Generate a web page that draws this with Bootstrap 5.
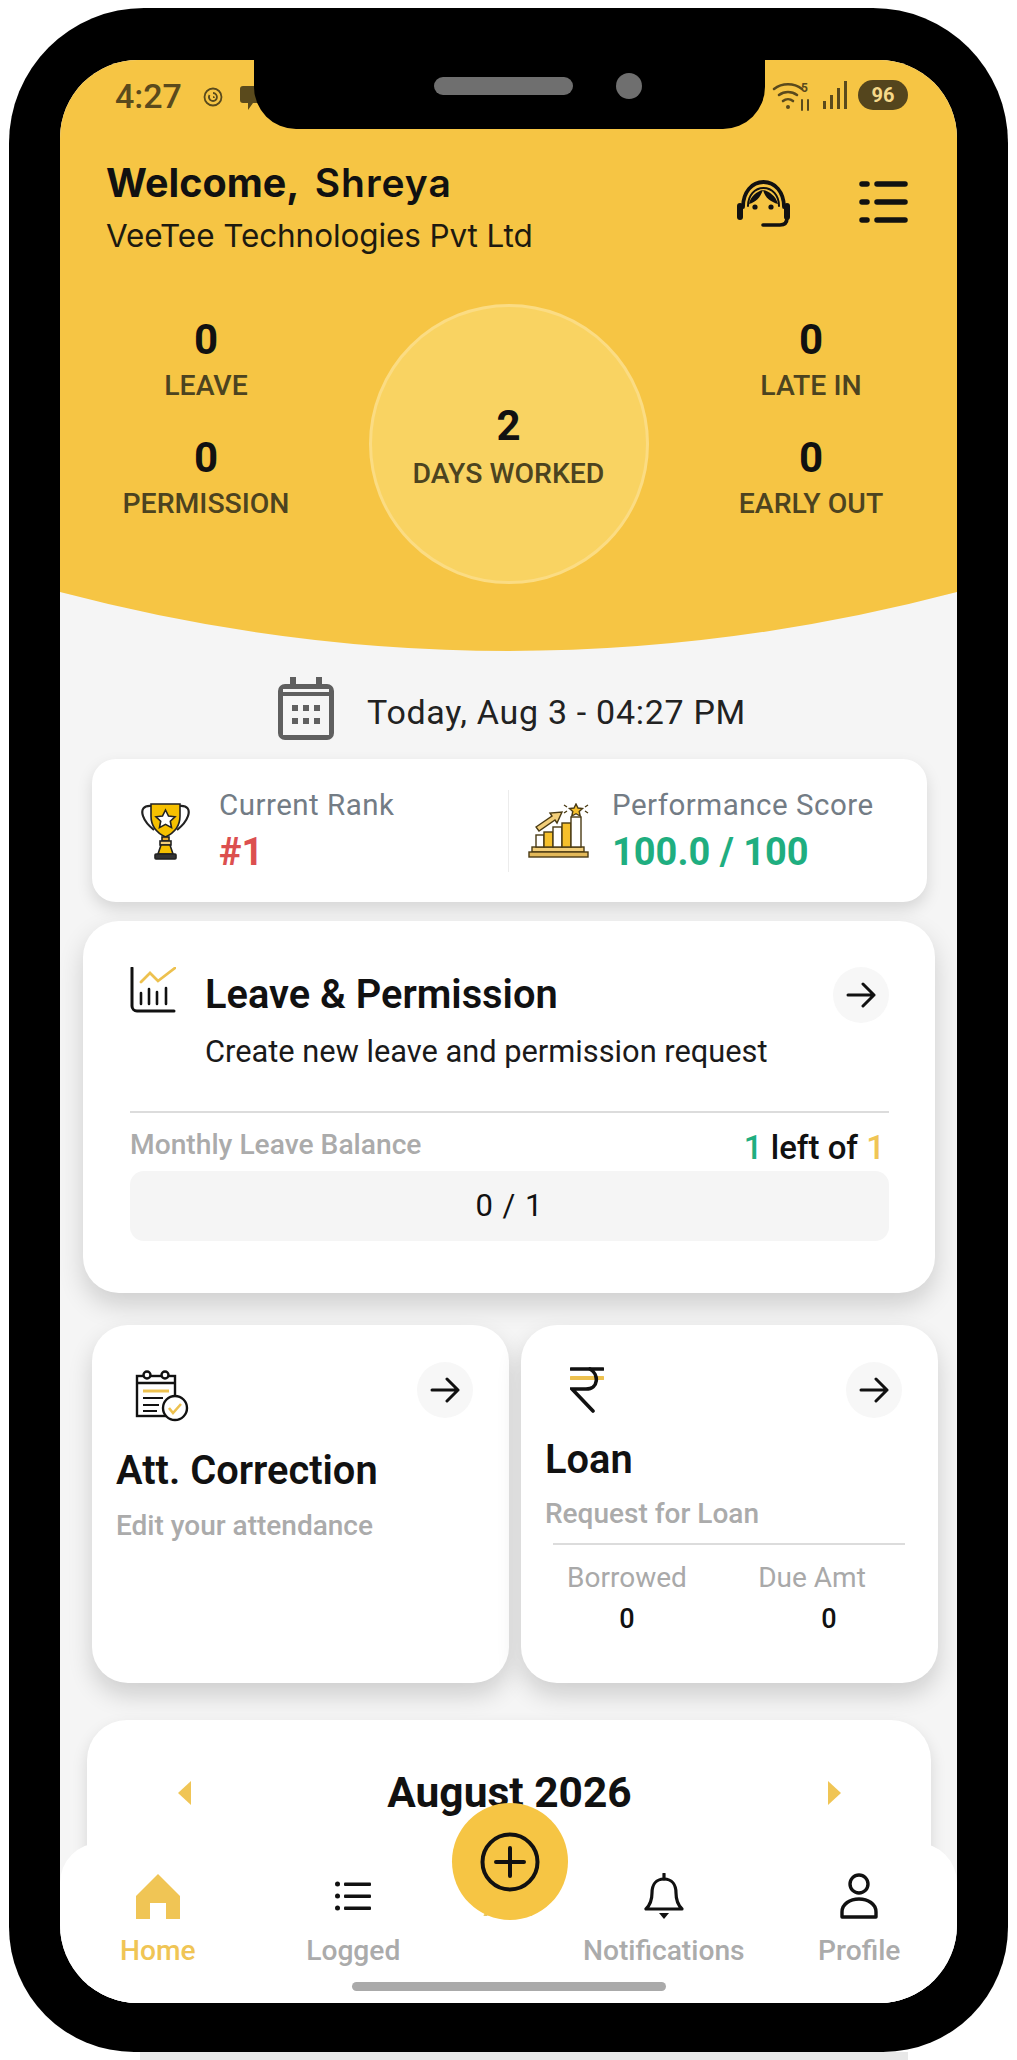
<!DOCTYPE html>
<html lang="en">
<head>
  <meta charset="UTF-8" />
  <meta name="viewport" content="width=device-width, initial-scale=1.0"/>
  <title>VeeTee Home</title>
  <link href="https://cdn.jsdelivr.net/npm/bootstrap@5.3.3/dist/css/bootstrap.min.css" rel="stylesheet"/>
  <style>
    html, body { height: 2060px; overflow: hidden; }
    body { background: #fff; padding: 8px 9px 0; font-family: Roboto, "Liberation Sans", sans-serif; color: #111; }

    .phone { width: 999px; height: 2044px; background: #000; border-radius: 135px 135px 125px 125px; padding: 52px 51px 49px; position: relative; }
    .under-band { width: 768px; height: 8px; background: #e8e8e8; margin-left: 131px; }
    .notch { position: absolute; left: 245px; top: 44px; width: 511px; height: 77px; background: #000; border-radius: 0 0 42px 42px; z-index: 5; padding: 0 0 10px 57px; }
    .speaker { width: 139px; height: 18px; border-radius: 9px; background: #6f6f6f; }
    .camera { width: 26px; height: 26px; border-radius: 50%; background: #6f6f6f; margin-left: 43px; }
    .screen { width: 897px; height: 1943px; background: #f5f5f5; border-radius: 78px; overflow: hidden; position: relative; }

    .hero { height: 591px; background: #f6c544; clip-path: path('M0 0H897V532Q448.5 650 0 532Z'); padding: 0 49px 0 46px; }
    .status-row { height: 72px; padding-top: 20px; }
    .status-time { font-size: 34px; line-height: 32px; font-weight: 500; color: #5a4a1c; width: 88px; margin-left: 9px; }
    .battery-pill { width: 50px; height: 30px; border-radius: 15px; background: #54451d; color: #f6d98a; font-size: 20px; font-weight: 700; line-height: 30px; text-align: center; }
    .greet-row { margin-top: 28px; }
    .welcome-line { font-family: Inter, Roboto, sans-serif; font-size: 39.5px; line-height: 46px; font-weight: 700; letter-spacing: 0; color: #111; white-space: nowrap; }
    .welcome-name { font-size: 39px; margin-left: 7px; font-weight: 600; letter-spacing: 1px; }
    .company-line { font-family: Inter, Roboto, sans-serif; font-size: 31.5px; line-height: 40px; margin-top: 10px; letter-spacing: -.1px; color: #1d1a10; white-space: nowrap; }
    .head-icons { gap: 69px; margin-top: 20px; }

    .stats-row { margin: 48px -49px 0 -46px; }
    .stat-side { width: 292px; padding-top: 14px; gap: 32px; }
    .stat-block { gap: 6px; }
    .stat-num { font-size: 42px; line-height: 44px; font-weight: 700; color: #111; text-align: center; }
    .stat-label { font-size: 28.4px; line-height: 36px; font-weight: 500; color: #4c4320; text-align: center; white-space: nowrap; }
    .stat-circle { width: 280px; height: 280px; border-radius: 50%; background: #f9d362; border: 3px solid #fbdc83; padding-top: 8px; gap: 8px; }

    .date-row { height: 63px; margin-top: 26px; gap: 33px; font-size: 34px; letter-spacing: .7px; color: #222; margin-left: 7px; }
    .date-text { padding-top: 7px; }

    .soft-card { background: #fff; border: 0; box-shadow: 0 7px 16px rgba(0,0,0,.13); }
    .rank-card { height: 143px; margin: 19px 30px 0 32px; border-radius: 24px; }
    .rank-half { width: 417px; height: 82px; padding-left: 49px; gap: 29px; border-right: 1px solid #ececec; }
    .perf-half { padding-left: 19px; gap: 23px; }
    .rank-label { font-size: 29.500px; line-height: 36px; color: #737c85; letter-spacing: .5px; white-space: nowrap; }
    .rank-value { font-size: 38px; line-height: 44px; font-weight: 700; margin-top: 7px; }
    .txt-red { color: #dc4f4f; }
    .txt-green { color: #1fae80; }
    .txt-gold { color: #f0c555; }

    .leave-card { height: 372px; margin: 19px 22px 0 23px; border-radius: 36px; padding: 46px 46px 0 47px; box-shadow: 0 12px 26px rgba(0,0,0,.16); }
    .leave-title { font-size: 39.800px; line-height: 56px; font-weight: 600; margin-left: 29px; white-space: nowrap; }
    .leave-sub { font-size: 30.800px; line-height: 40px; margin: 9px 0 0 75px; color: #1a1a1a; white-space: nowrap; }
    .thin-line { height: 2px; background: #dcdcdc; }
    .leave-line { margin-top: 39px; }
    .balance-row { margin-top: 14px; height: 40px; }
    .balance-label { font-size: 28.200px; line-height: 36px; font-weight: 500; color: #ababab; }
    .balance-left { font-size: 33px; line-height: 40px; font-weight: 500; margin-top: 1px; margin-right: 4px; }
    .balance-bar { height: 70px; margin-top: 4px; border-radius: 14px; background: #f5f5f5; font-size: 31px; letter-spacing: 1px; }

    .arrow-btn { width: 56px; height: 56px; border-radius: 50%; background: #f7f7f7; flex-shrink: 0; }
    .pair-row { margin: 32px 0 0 32px; gap: 12px; }
    .small-card { width: 417px; height: 358px; border-radius: 36px; padding: 37px 36px 0 24px; box-shadow: 0 12px 24px rgba(0,0,0,.16); }
    .small-title { font-size: 39.800px; line-height: 48px; font-weight: 600; white-space: nowrap; }
    .small-sub { font-size: 28px; line-height: 36px; color: #ababab; font-weight: 500; white-space: nowrap; }
    .att-icon { margin: 8px 0 0 19px; }
    .att-title { margin-top: 25px; }
    .att-sub { margin-top: 13px; }
    .rupee-icon { margin: 5px 0 0 25px; }
    .loan-title { margin-top: 18px; }
    .loan-sub { margin-top: 12px; }
    .loan-line { margin: 11px -3px 0 8px; }
    .loan-cols { margin: 16px 0 0 -8px; }
    .loan-col { width: 187px; }
    .loan-col-right { margin-left: 5px; }
    .loan-label { font-size: 28px; line-height: 34px; color: #a9a9a9; }
    .loan-val { font-size: 27px; line-height: 32px; font-weight: 500; margin-top: 8px; color: #111; }
    .loan-val-shift { padding-left: 34px; }

    .month-card { height: 400px; margin: 37px 26px 0 27px; border-radius: 40px; padding: 48px 90px 0 91px; }
    .month-title { font-size: 42.500px; line-height: 50px; font-weight: 700; }

    .bottom-nav { position: absolute; left: 0; right: 0; bottom: 0; height: 160px; background: #fff; border-radius: 40px 40px 0 0; padding-top: 30px; z-index: 2; }
    .nav-cell { width: 195.5px; }
    .nav-gap { width: 115px; padding-top: 16px; font-size: 28px; line-height: 36px; font-weight: 500; color: #e3c468; text-align: center; }
    .nav-icon { height: 46px; }
    .nav-label { font-size: 28.200px; line-height: 36px; font-weight: 500; color: #ababab; margin-top: 14px; white-space: nowrap; }
    .nav-label-on { color: #f0c555; }
    .home-bar { width: 314px; height: 9px; border-radius: 5px; background: #aaa; margin: 13px auto 0; }
    .fab-btn { position: absolute; left: 392px; top: -40px; width: 116px; height: 117px; border-radius: 50%; background: #f6c544; z-index: 1; }
  </style>
</head>
<body>
  <div class="phone">
    <div class="notch d-flex align-items-center justify-content-center">
      <div class="speaker"></div>
      <div class="camera"></div>
    </div>
    <div class="screen">
      <div class="hero">
        <div class="status-row d-flex justify-content-between">
          <div class="d-flex">
            <div class="status-time">4:27</div>
            <svg width="20" height="22" viewBox="0 0 20 22" fill="none" stroke="#5a4a1c" stroke-width="1.8" style="margin-top:6px"><circle cx="10" cy="11" r="8.5"/><path d="M10 7a4 4 0 1 1-3.5 2M10 11a1 1 0 0 1 1 1"/></svg>
            <svg width="24" height="28" viewBox="0 0 24 28" fill="#5a4a1c" style="margin:4px 0 0 16px"><path d="M4 2h16a3 3 0 0 1 3 3v11a3 3 0 0 1-3 3h-6l-5 7v-7H4a3 3 0 0 1-3-3V5a3 3 0 0 1 3-3z"/></svg>
          </div>
          <div class="d-flex align-items-start" style="gap:10px">
            <svg width="40" height="32" viewBox="0 0 40 32" fill="none" stroke="#5a4a1c" stroke-width="2.6" stroke-linecap="round"><path d="M2 9a23 23 0 0 1 28 0M7 15a15 15 0 0 1 18 0M11 21a8 8 0 0 1 10 0"/><circle cx="16" cy="27" r="2" fill="#5a4a1c" stroke="none"/><path d="M30 20v10M36 30V20" stroke-width="2"/><text x="29" y="12" font-size="12" font-weight="700" fill="#5a4a1c" stroke="none" font-family="Roboto, sans-serif">5</text></svg>
            <svg width="26" height="30" viewBox="0 0 26 30" fill="#5a4a1c"><rect x="1" y="21" width="3" height="8"/><rect x="8" y="15" width="3" height="14"/><rect x="15" y="8" width="3" height="21"/><rect x="22" y="1" width="3" height="28"/></svg>
            <div class="battery-pill">96</div>
          </div>
        </div>
        <div class="greet-row d-flex justify-content-between">
          <div>
            <div class="welcome-line">Welcome, <span class="welcome-name">Shreya</span></div>
            <div class="company-line">VeeTee Technologies Pvt Ltd</div>
          </div>
          <div class="head-icons d-flex align-items-start">
            <svg width="53" height="47" viewBox="0 0 53 47" fill="none" stroke="#111" stroke-linecap="round" stroke-linejoin="round">
              <path d="M6 27C6 12 15 2 26.500 2S47 12 47 27" stroke-width="3.800"/>
              <path d="M11 26C11 15 18 8 26.500 8S42 15 42 26" stroke-width="2"/>
              <path d="M12 24c1-7 8-13 14-14-3 8-7 12-14 14zM26 10c6 1 13 6 15 14-7-2-13-6-15-14z" fill="#111" stroke="none"/>
              <circle cx="18" cy="27" r="2.600" fill="#111" stroke="none"/><circle cx="34" cy="27" r="2.600" fill="#111" stroke="none"/>
              <rect x="0" y="23" width="6" height="17" rx="3" fill="#111" stroke="none"/><rect x="47" y="23" width="6" height="17" rx="3" fill="#111" stroke="none"/>
              <path d="M50 38c0 5-3 7-7 7H26" stroke-width="3.600"/>
            </svg>
            <svg width="49" height="45" viewBox="0 0 49 45" fill="none" stroke="#111" stroke-width="5.500" stroke-linecap="round"><path d="M3 4h5M3 22h5M3 40h5M18 4h28M18 22h28M18 40h28"/></svg>
          </div>
        </div>
        <div class="stats-row d-flex justify-content-between">
          <div class="stat-side d-flex flex-column">
            <div class="stat-block d-flex flex-column"><div class="stat-num">0</div><div class="stat-label">LEAVE</div></div>
            <div class="stat-block d-flex flex-column"><div class="stat-num">0</div><div class="stat-label">PERMISSION</div></div>
          </div>
          <div class="stat-circle d-flex flex-column align-items-center justify-content-center">
            <div class="stat-num">2</div>
            <div class="stat-label">DAYS WORKED</div>
          </div>
          <div class="stat-side d-flex flex-column">
            <div class="stat-block d-flex flex-column"><div class="stat-num">0</div><div class="stat-label">LATE IN</div></div>
            <div class="stat-block d-flex flex-column"><div class="stat-num">0</div><div class="stat-label">EARLY OUT</div></div>
          </div>
        </div>
      </div>

      <div class="date-row d-flex align-items-center justify-content-center">
        <svg width="56" height="63" viewBox="0 0 56 63" fill="#5f5f5f"><path d="M12 0h6v7h20V0h6v7h5a7 7 0 0 1 7 7v42a7 7 0 0 1-7 7H7a7 7 0 0 1-7-7V14a7 7 0 0 1 7-7h5z"/><rect x="5" y="19" width="46" height="39" fill="#f5f5f5"/><rect x="5" y="12" width="46" height="3" fill="#f5f5f5"/><g><rect x="14" y="28" width="6" height="6"/><rect x="25" y="28" width="6" height="6"/><rect x="36" y="28" width="6" height="6"/><rect x="14" y="41" width="6" height="6"/><rect x="25" y="41" width="6" height="6"/><rect x="36" y="41" width="6" height="6"/></g></svg>
        <span class="date-text">Today, Aug 3 - 04:27 PM</span>
      </div>

      <div class="card soft-card rank-card flex-row align-items-center">
        <div class="rank-half d-flex align-items-center">
          <svg width="49" height="58" viewBox="0 0 49 58" stroke="#222" stroke-width="1.6"><path d="M11 4C2 3 0 8 2 14s6 10 11 14M38 4c9-1 11 4 9 10s-6 10-11 14" fill="none" stroke-width="2.200"/><path d="M10 2h29v12c0 10-6 17-14.500 21C16 31 10 24 10 14z" fill="#f6c000"/><path d="M24.500 8l3 6 6.500.8-4.700 4.400 1.200 6.400-6-3.200-6 3.200 1.200-6.400-4.700-4.400 6.500-.8z" fill="#fff"/><rect x="21" y="35" width="7" height="4" fill="#e8a92c"/><rect x="19" y="39" width="11" height="4" fill="#f3cf7a"/><path d="M20 43h9l3 9H17z" fill="#f6c000"/><rect x="14" y="52" width="21" height="5" rx="1" fill="#333"/></svg>
          <div>
            <div class="rank-label">Current Rank</div>
            <div class="rank-value txt-red">#1</div>
          </div>
        </div>
        <div class="perf-half d-flex align-items-center">
          <svg width="61" height="56" viewBox="0 0 61 56" stroke="#4a3b14" stroke-width="1.400"><rect x="4" y="44" width="52" height="5" fill="#f3cf7a"/><rect x="1" y="49" width="59" height="5" fill="#e3b95a"/><rect x="8" y="32" width="8" height="12" fill="#fff"/><rect x="16" y="29" width="9" height="15" fill="#f6c02c"/><rect x="25" y="24" width="9" height="20" fill="#fff"/><rect x="34" y="20" width="9" height="24" fill="#f6c02c"/><rect x="43" y="14" width="10" height="30" fill="#fff"/><path d="M8 24l16-11-2-3 12-1-5 11-2-3-16 11z" fill="#f3cf7a"/><path d="M48 1l2 4 4.500.5-3.300 3 1 4.500-4.200-2.300-4.200 2.300 1-4.500-3.300-3 4.500-.5z" fill="#f6c02c"/><path d="M36 2l3 2M36 10l3-2M60 2l-3 2M60 10l-3-2" fill="none"/></svg>
          <div>
            <div class="rank-label">Performance Score</div>
            <div class="rank-value txt-green">100.0 / 100</div>
          </div>
        </div>
      </div>

      <div class="card soft-card leave-card">
        <div class="d-flex align-items-start">
          <svg width="46" height="46" viewBox="0 0 46 46" fill="none" stroke="#111" stroke-width="2.600" stroke-linecap="round"><path d="M2 1v38a5 5 0 0 0 5 5h37" stroke-width="3"/><path d="M11 26v11M19 22v15M27 25v12M36 21v16"/><path d="M11 15l9-9 8 8L45 1" stroke="#edc14f" stroke-width="2.800"/></svg>
          <div class="leave-title flex-grow-1">Leave &amp; Permission</div>
          <div class="arrow-btn d-flex align-items-center justify-content-center">
            <svg width="30" height="26" viewBox="0 0 30 26" fill="none" stroke="#111" stroke-width="3" stroke-linecap="round" stroke-linejoin="round"><path d="M2 13h26M17 2l11 11-11 11"/></svg>
          </div>
        </div>
        <div class="leave-sub">Create new leave and permission request</div>
        <div class="thin-line leave-line"></div>
        <div class="balance-row d-flex justify-content-between align-items-start">
          <div class="balance-label">Monthly Leave Balance</div>
          <div class="balance-left"><span class="txt-green">1</span> left of <span class="txt-gold">1</span></div>
        </div>
        <div class="balance-bar d-flex align-items-center justify-content-center">0 / 1</div>
      </div>

      <div class="pair-row d-flex">
        <div class="card soft-card small-card">
          <div class="d-flex justify-content-between align-items-start">
            <svg class="att-icon" width="54" height="52" viewBox="0 0 54 52" fill="none" stroke="#111" stroke-width="2.400"><rect x="2" y="6" width="38" height="40"/><circle cx="12" cy="5" r="3.500" fill="#fff"/><circle cx="30" cy="5" r="3.500" fill="#fff"/><path d="M2 13h38"/><path d="M8 21h26" stroke="#edc14f" stroke-width="3"/><path d="M8 28h20M8 35h16M8 41h14" stroke-width="2"/><circle cx="40" cy="38" r="12" fill="#fff"/><path d="M34 38l4 5 8-9" stroke="#edc14f" stroke-width="2.600"/></svg>
            <div class="arrow-btn d-flex align-items-center justify-content-center">
              <svg width="30" height="26" viewBox="0 0 30 26" fill="none" stroke="#111" stroke-width="3" stroke-linecap="round" stroke-linejoin="round"><path d="M2 13h26M17 2l11 11-11 11"/></svg>
            </div>
          </div>
          <div class="small-title att-title">Att. Correction</div>
          <div class="small-sub att-sub">Edit your attendance</div>
        </div>
        <div class="card soft-card small-card">
          <div class="d-flex justify-content-between align-items-start">
            <svg class="rupee-icon" width="34" height="46" viewBox="0 0 34 46" fill="none" stroke="#111" stroke-width="3.600" stroke-linecap="round"><path d="M1 2h32"/><path d="M1 11h32" stroke="#edc14f" stroke-width="4"/><path d="M20 2c9 5 9 20-4 20H2l21 22"/></svg>
            <div class="arrow-btn d-flex align-items-center justify-content-center">
              <svg width="30" height="26" viewBox="0 0 30 26" fill="none" stroke="#111" stroke-width="3" stroke-linecap="round" stroke-linejoin="round"><path d="M2 13h26M17 2l11 11-11 11"/></svg>
            </div>
          </div>
          <div class="small-title loan-title">Loan</div>
          <div class="small-sub loan-sub">Request for Loan</div>
          <div class="thin-line loan-line"></div>
          <div class="loan-cols d-flex">
            <div class="loan-col text-center">
              <div class="loan-label">Borrowed</div>
              <div class="loan-val">0</div>
            </div>
            <div class="loan-col loan-col-right text-center">
              <div class="loan-label">Due Amt</div>
              <div class="loan-val loan-val-shift">0</div>
            </div>
          </div>
        </div>
      </div>

      <div class="card soft-card month-card">
        <div class="d-flex justify-content-between align-items-center">
          <svg width="13" height="24" viewBox="0 0 13 24" fill="#f0c555"><path d="M13 0v24L0 12z"/></svg>
          <div class="month-title">August 2026</div>
          <svg width="13" height="24" viewBox="0 0 13 24" fill="#f0c555"><path d="M0 0v24l13-12z"/></svg>
        </div>
      </div>

      <div class="bottom-nav">
        <div class="fab-btn d-flex align-items-center justify-content-center">
          <svg width="60" height="60" viewBox="0 0 60 60" fill="none" stroke="#111" stroke-width="4" stroke-linecap="round"><circle cx="30" cy="30" r="27.500"/><path d="M30 16v28M16 30h28"/></svg>
        </div>
        <div class="d-flex">
          <div class="nav-cell d-flex flex-column align-items-center">
            <svg class="nav-icon" width="44" height="46" viewBox="0 0 44 46" fill="#f0c555"><path d="M22 1L44 23v23H30V30H14v16H0V23z"/></svg>
            <div class="nav-label nav-label-on">Home</div>
          </div>
          <div class="nav-cell d-flex flex-column align-items-center">
            <svg class="nav-icon" width="36" height="46" viewBox="0 0 36 46" fill="#111"><circle cx="2.500" cy="11" r="2.500"/><circle cx="2.500" cy="23" r="2.500"/><circle cx="2.500" cy="35" r="2.500"/><rect x="9" y="9.500" width="27" height="3.600" rx="1"/><rect x="9" y="21.500" width="27" height="3.600" rx="1"/><rect x="9" y="33.500" width="27" height="3.600" rx="1"/></svg>
            <div class="nav-label">Logged</div>
          </div>
          <div class="nav-gap">Add</div>
          <div class="nav-cell d-flex flex-column align-items-center">
            <svg class="nav-icon" width="40" height="46" viewBox="0 0 40 46" fill="none" stroke="#111" stroke-width="3.200" stroke-linejoin="round"><path d="M20 6c-8 0-12 6-12 14 0 8-2 12-6 16h36c-4-4-6-8-6-16 0-8-4-14-12-14z"/><path d="M20 1v5" stroke-linecap="round"/><path d="M15 40h10l-5 6z" fill="#111" stroke="none"/></svg>
            <div class="nav-label">Notifications</div>
          </div>
          <div class="nav-cell d-flex flex-column align-items-center">
            <svg class="nav-icon" width="38" height="46" viewBox="0 0 38 46" fill="none" stroke="#111" stroke-width="3.400" stroke-linejoin="round"><circle cx="19" cy="11" r="9"/><path d="M2 44v-5c0-8 8-13 17-13s17 5 17 13v5z"/></svg>
            <div class="nav-label">Profile</div>
          </div>
        </div>
        <div class="home-bar"></div>
      </div>
    </div>
  </div>
  <div class="under-band"></div>
</body>
</html>
